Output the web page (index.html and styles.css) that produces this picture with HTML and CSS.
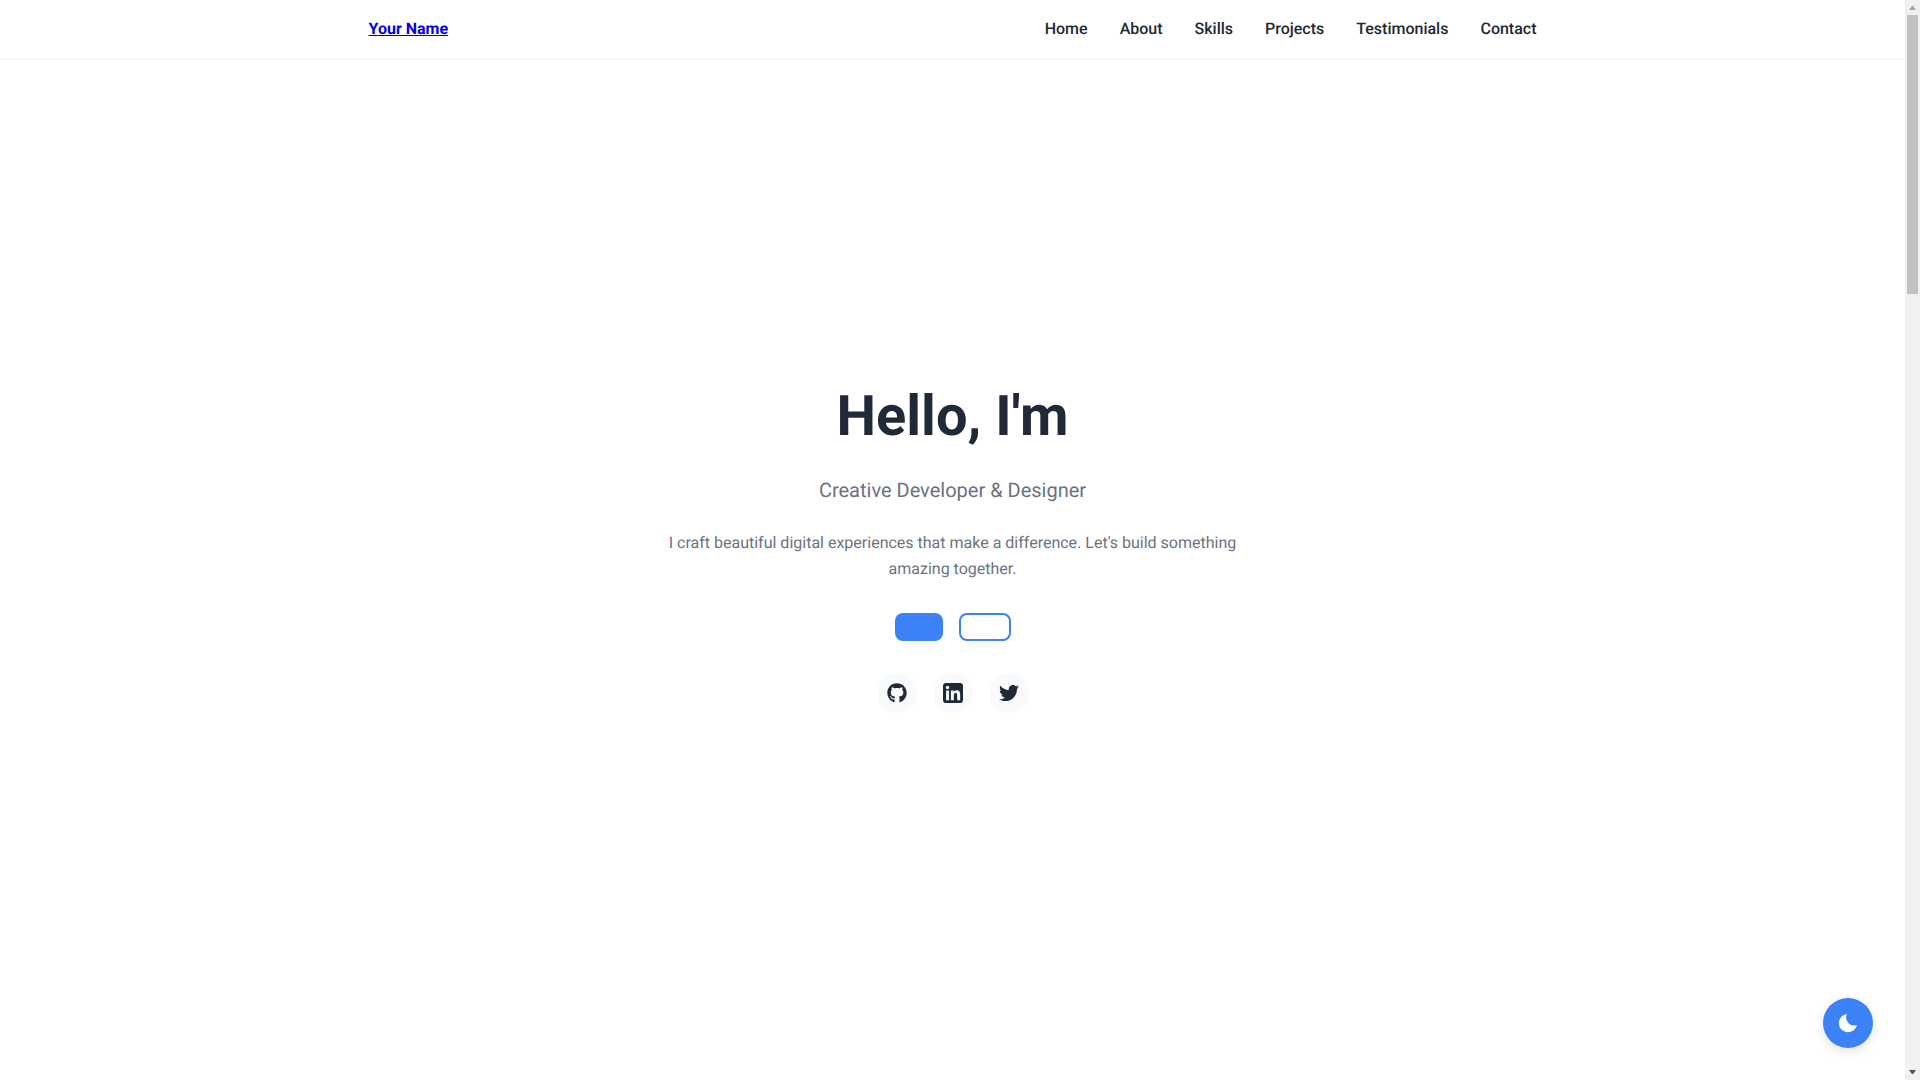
FILE: index.html
```html
<!DOCTYPE html>
<html lang="en">
<head>
  <meta charset="UTF-8" />
  <title>Your Name</title>
  <link rel="stylesheet" href="styles.css">
</head>
<body>

  <div class="page">
    <header class="site-header">
      <nav class="nav-inner">
        <a class="brand" href="#home">Your Name</a>
        <ul class="nav-links">
          <li><a href="#home">Home</a></li>
          <li><a href="#about">About</a></li>
          <li><a href="#skills">Skills</a></li>
          <li><a href="#projects">Projects</a></li>
          <li><a href="#testimonials">Testimonials</a></li>
          <li><a href="#contact">Contact</a></li>
        </ul>
      </nav>
    </header>

    <section id="home" class="hero">
      <h1 class="hero-title">Hello, I'm</h1>
      <p class="hero-subtitle">Creative Developer &amp; Designer</p>
      <p class="hero-text">I craft beautiful digital experiences that make a difference. Let's build something amazing together.</p>

      <div class="hero-buttons">
        <a class="btn btn-primary" href="#projects"></a>
        <a class="btn btn-outline" href="#contact"></a>
      </div>

      <div class="social-links">
        <a class="social-link" href="#" aria-label="GitHub">
          <svg viewBox="0 0 496 512" class="social-icon"><path d="M165.9 397.4c0 2-2.3 3.6-5.2 3.6-3.3 0-5.6-1.6-5.6-3.6 0-2 2.3-3.6 5.2-3.6 3-.3 5.6 1.3 5.6 3.6zm-31.1-4.5c-.7 2 1.3 4.3 4.3 4.9 2.6 1 5.6 0 6.2-2s-1.3-4.3-4.3-5c-2.6-.7-5.5.3-6.2 2.1zm44.2-1.7c-2.9.7-4.9 2.6-4.6 4.9.3 2 2.9 3.3 5.9 2.6 2.9-.7 4.9-2.6 4.6-4.6-.3-1.9-3-3.2-5.9-2.9zM244.8 8C106.1 8 0 113.3 0 252c0 110.9 69.8 205.8 169.5 239.2 12.8 2.3 17.3-5.6 17.3-12.1 0-6.2-.3-40.4-.3-61.4 0 0-70 15-84.7-29.8 0 0-11.4-29.1-27.8-36.6 0 0-22.9-15.7 1.6-15.4 0 0 24.9 2 38.6 25.8 21.9 38.6 58.6 27.5 72.9 20.9 2.3-16 8.8-27.1 16-33.7-55.9-6.2-112.3-14.3-112.3-110.5 0-27.5 7.6-41.3 23.6-58.9-2.6-6.5-11.1-33.3 2.6-67.9 20.9-6.5 69 27 69 27 20-5.6 41.5-8.5 62.8-8.5s42.8 2.9 62.8 8.5c0 0 48.1-33.6 69-27 13.7 34.7 5.2 61.4 2.6 67.9 16 17.7 25.8 31.5 25.8 58.9 0 96.5-58.9 104.2-114.8 110.5 9.2 7.9 17 22.9 17 46.4 0 33.7-.3 75.4-.3 83.6 0 6.5 4.6 14.4 17.3 12.1C428.2 457.8 496 362.9 496 252 496 113.3 383.5 8 244.8 8zM97.2 352.9c-1.3 1-1 3.3.7 5.2 1.6 1.6 3.9 2.3 5.2 1 1.3-1 1-3.3-.7-5.2-1.6-1.6-3.9-2.3-5.2-1zm-10.8-8.1c-.7 1.3.3 2.9 2.3 3.9 1.6 1 3.6.7 4.3-.7.7-1.3-.3-2.9-2.3-3.9-2-.6-3.6-.3-4.3.7zm32.4 35.6c-1.6 1.3-1 4.3 1.3 6.2 2.3 2.3 5.2 2.6 6.5 1 1.3-1.3.7-4.3-1.3-6.2-2.2-2.3-5.2-2.6-6.5-1zm-11.4-14.7c-1.6 1-1.6 3.6 0 5.9 1.6 2.3 4.3 3.3 5.6 2.3 1.6-1.3 1.6-3.9 0-6.2-1.4-2.3-4-3.3-5.6-2z"/></svg>
        </a>
        <a class="social-link" href="#" aria-label="LinkedIn">
          <svg viewBox="0 32 448 448" class="social-icon"><path d="M384 32H64C28.7 32 0 60.7 0 96v320c0 35.3 28.7 64 64 64h320c35.3 0 64-28.7 64-64V96c0-35.3-28.7-64-64-64zM135.4 416H69V202.2h66.5V416zm-33.2-243c-21.3 0-38.5-17.3-38.5-38.5S80.9 96 102.2 96c21.2 0 38.5 17.3 38.5 38.5 0 21.3-17.2 38.5-38.5 38.5zm282.1 243h-66.4V312c0-24.8-.5-56.7-34.5-56.7-34.6 0-39.9 27-39.9 54.9V416h-66.4V202.2h63.7v29.2h.9c8.9-16.8 30.6-34.5 62.9-34.5 67.2 0 79.7 44.3 79.7 101.9V416z"/></svg>
        </a>
        <a class="social-link" href="#" aria-label="Twitter">
          <svg viewBox="0 0 512 512" class="social-icon"><path d="M459.37 151.716c.325 4.548.325 9.097.325 13.645 0 138.72-105.583 298.558-298.558 298.558-59.452 0-114.68-17.219-161.137-47.106 8.447.974 16.568 1.299 25.34 1.299 49.055 0 94.213-16.568 130.274-44.832-46.132-.975-84.792-31.188-98.112-72.772 6.498.974 12.995 1.624 19.818 1.624 9.421 0 18.843-1.3 27.614-3.573-48.081-9.747-84.143-51.98-84.143-102.985v-1.299c13.969 7.797 30.214 12.67 47.431 13.319-28.264-18.843-46.781-51.005-46.781-87.391 0-19.492 5.197-37.36 14.294-52.954 51.655 63.675 129.3 105.258 216.365 109.807-1.624-7.797-2.599-15.918-2.599-24.04 0-57.828 46.782-104.934 104.934-104.934 30.213 0 57.502 12.67 76.67 33.137 23.715-4.548 46.456-13.32 66.599-25.34-7.798 24.366-24.366 44.833-46.132 57.827 21.117-2.273 41.584-8.122 60.426-16.243-14.292 20.791-32.161 39.308-52.628 54.253z"/></svg>
        </a>
      </div>
    </section>

    <button class="theme-toggle" aria-label="Toggle theme">
      <svg viewBox="0 0 24 24" class="theme-icon"><path d="M11 3A9.2 9.2 0 1 0 21 14 8 8 0 0 1 11 3z"/></svg>
    </button>
  </div>

  <div class="scrollbar">
    <span class="scroll-arrow scroll-arrow-up"></span>
    <div class="scroll-thumb"></div>
    <span class="scroll-arrow scroll-arrow-down"></span>
  </div>

</body>
</html>
```

FILE: styles.css
```css
/* ===== base ===== */
* {
  box-sizing: border-box;
}

html,
body {
  height: 100%;
  margin: 0;
  overflow: hidden;
}

body {
  display: flex;
  font-family: Roboto, "Liberation Sans", sans-serif;
  font-size: 16px;
  line-height: 1.6;
  color: #1f2937;
  background-color: #fff;
  text-rendering: geometricPrecision;
}

.page {
  position: relative;
  flex: 1;
  min-width: 0;
}

/* ===== nav ===== */
.site-header {
  background-color: #fff;
  box-shadow: 0 1px 3px rgba(0, 0, 0, 0.05);
}

.nav-inner {
  display: flex;
  align-items: center;
  justify-content: space-between;
  max-width: 1200px;
  height: 58px;
  margin: 0 auto;
  padding: 0 16px;
}

.brand {
  font-weight: 700;
}

.nav-links {
  display: flex;
  gap: 32px;
  margin: 0;
  padding: 0;
  list-style: none;
}

.nav-links a {
  font-weight: 500;
  color: #1f2937;
  text-decoration: none;
}

/* ===== hero ===== */
.hero {
  display: flex;
  flex-direction: column;
  align-items: center;
  padding-top: 314px;
  text-align: center;
}

.hero-title {
  margin: 0 0 12.4px;
  font-size: 56px;
  font-weight: 700;
  line-height: 1.6;
}

.hero-subtitle {
  margin: 0 0 24px;
  font-size: 20px;
  color: #6b7280;
}

.hero-text {
  max-width: 600px;
  margin: 0 0 32px;
  color: #6b7280;
}

.hero-buttons {
  display: flex;
  gap: 16px;
  margin-bottom: 32px;
}

.btn {
  display: block;
  height: 28px;
  border-radius: 8px;
}

.btn-primary {
  width: 48px;
  background-color: #3b82f6;
}

.btn-outline {
  width: 52px;
  border: 2px solid #3b82f6;
}

.social-links {
  display: flex;
  gap: 16px;
}

.social-link {
  display: flex;
  align-items: center;
  justify-content: center;
  width: 40px;
  height: 40px;
  border-radius: 50%;
  background-color: #f9fafb;
}

.social-icon {
  width: 20px;
  height: 20px;
  fill: #1f2937;
}

/* ===== theme button ===== */
.theme-toggle {
  position: absolute;
  right: 32px;
  bottom: 32px;
  display: flex;
  align-items: center;
  justify-content: center;
  width: 50px;
  height: 50px;
  padding: 0;
  border: none;
  border-radius: 50%;
  background-color: #3b82f6;
  box-shadow: 0 4px 12px rgba(0, 0, 0, 0.1);
}

.theme-icon {
  width: 24px;
  height: 24px;
  fill: #fff;
}

/* ===== scrollbar ===== */
.scrollbar {
  display: flex;
  flex-direction: column;
  align-items: center;
  flex: 0 0 15px;
  background-color: #f1f1f1;
}

.scroll-arrow {
  display: block;
  flex: 0 0 4px;
  width: 7px;
  height: 4px;
  border-left: 3.5px solid transparent;
  border-right: 3.5px solid transparent;
}

.scroll-arrow-up {
  margin: 6px 0 5px;
  border-bottom: 4px solid #a3a3a3;
}

.scroll-arrow-down {
  margin: auto 0 6px;
  border-top: 4px solid #505050;
}

.scroll-thumb {
  width: 11px;
  height: 279px;
  background-color: #c1c1c1;
}
```
